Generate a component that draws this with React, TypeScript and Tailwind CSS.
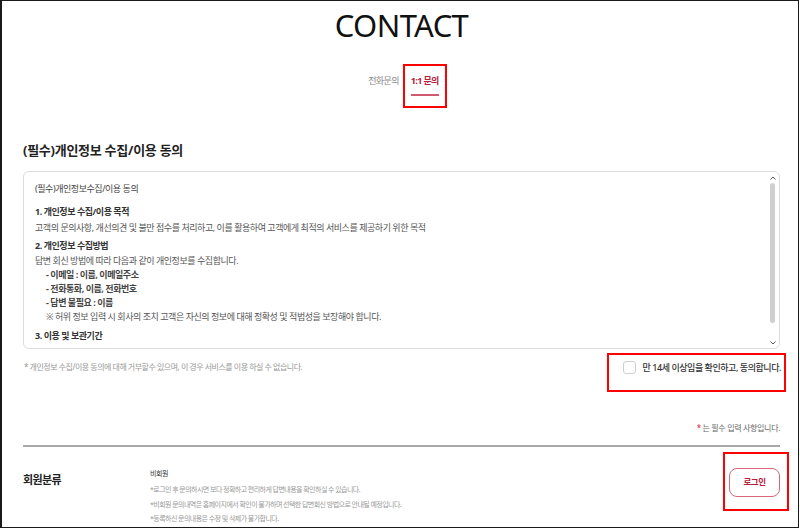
import React from "react";

const FONT = { fontFamily: "'Noto Sans', 'Noto Sans CJK KR', sans-serif" };

const Chevron = ({ up }: { up?: boolean }) => (
  <svg width="6" height="4" viewBox="0 0 6 4" className="block">
    <path
      d={up ? "M0.5 3.5 L3 1 L5.5 3.5" : "M0.5 0.5 L3 3 L5.5 0.5"}
      fill="none"
      stroke="#555"
      strokeWidth="1"
    />
  </svg>
);

const App = () => {
  return (
    <div
      style={FONT}
      className="box-border h-[528px] w-[799px] overflow-hidden border-t border-r border-b border-l-2 border-[#1a1a1a] bg-white"
    >
      <div className="ml-[21px] w-[757px]">
        {/* Title */}
        <h1 className="mt-[6px] text-center text-[31px] leading-[36px] font-normal tracking-[-0.02em] text-[#111]">
          CONTACT
        </h1>

        {/* Tabs */}
        <div className="mt-[21px] ml-[12px] flex items-start justify-center gap-[4px]">
          <span className="mt-[11px] text-[9px] leading-[12px] tracking-[-0.07em] text-[#888]">
            전화문의
          </span>
          <div className="border-2 border-[#ff0000] px-[6px] pt-[9px] pb-[10px]">
            <div className="border-b-2 border-[#d25a70] pb-[7px] text-[9px] leading-[12px] font-bold tracking-[-0.07em] text-[#b3213f]">
              1:1 문의
            </div>
          </div>
        </div>

        {/* Section title */}
        <h2 className="mt-[33px] text-[13px] leading-[18px] font-bold tracking-[-0.02em] text-[#222]">
          (필수)개인정보 수집/이용 동의
        </h2>

        {/* Terms box */}
        <div className="mt-[12px] box-border flex h-[178px] rounded-[6px] border border-[#dcdcdc]">
          <div className="flex-1 overflow-hidden pt-[10px] pl-[11px] text-[9px] leading-[14px] tracking-[-0.05em] text-[#555]">
            <p className="text-[#444]">(필수)개인정보수집/이용 동의</p>
            <p className="mt-[9px] font-bold text-[#333]">1. 개인정보 수집/이용 목적</p>
            <p className="mt-[2px]">
              고객의 문의사항, 개선의견 및 불만 접수를 처리하고, 이를 활용하여 고객에게 최적의 서비스를 제공하기 위한 목적
            </p>
            <p className="mt-[4px] font-bold text-[#333]">2. 개인정보 수집방법</p>
            <p className="mt-[1px]">답변 회신 방법에 따라 다음과 같이 개인정보를 수집합니다.</p>
            <div className="pl-[11px]">
              <p className="font-bold text-[#444]">- 이메일 : 이름, 이메일주소</p>
              <p className="font-bold text-[#444]">- 전화통화, 이름, 전화번호</p>
              <p className="font-bold text-[#444]">- 답변 불필요 : 이름</p>
              <p>※ 허위 정보 입력 시 회사의 조치 고객은 자신의 정보에 대해 정확성 및 적법성을 보장해야 합니다.</p>
            </div>
            <p className="mt-[5px] font-bold text-[#333]">3. 이용 및 보관기간</p>
          </div>
          {/* scrollbar */}
          <div className="mr-[2px] flex w-[9px] flex-col items-center pt-[4px] pb-[3px]">
            <Chevron up />
            <div className="mt-[3px] h-[140px] w-[5px] rounded-full bg-[#cfcfcf]" />
            <div className="flex-1" />
            <Chevron />
          </div>
        </div>

        {/* Note + agreement */}
        <div className="mt-[4px] flex items-start justify-between">
          <p className="mt-[8px] pl-[1px] text-[8px] leading-[12px] tracking-[-0.06em] text-[#999]">
            * 개인정보 수집/이용 동의에 대해 거부할수 있으며, 이 경우 서비스를 이용 하실 수 없습니다.
          </p>
          <div className="mr-[-6px] border-2 border-[#ff0000] pt-[6px] pr-[3px] pb-[16px] pl-[14px]">
            <label className="flex items-center gap-[7px]">
              <span className="box-border block h-[13px] w-[13px] rounded-[3px] border border-[#cfcfcf] bg-white" />
              <span className="text-[9px] leading-[12px] font-medium tracking-[-0.05em] text-[#333]">
                만 14세 이상임을 확인하고, 동의합니다.
              </span>
            </label>
          </div>
        </div>

        <p className="mt-[30px] text-right text-[8px] leading-[12px] tracking-[-0.04em] text-[#666]">
          <span className="text-[#e0243c]">*</span> 는 필수 입력 사항입니다.
        </p>

        <div className="mt-[11px] h-[2px] bg-[#a9a9a9]" />

        {/* Member row */}
        <div className="flex items-start">
          <div className="mt-[25px] w-[127px] text-[11px] leading-[16px] font-bold tracking-[-0.06em] text-[#222]">
            회원분류
          </div>
          <div className="mt-[20px] flex-1">
            <p className="text-[7px] leading-[14px] tracking-[-0.06em] text-[#333]">비회원</p>
            <div className="mt-[2px] text-[7px] leading-[14.5px] tracking-[-0.08em] text-[#999]">
              <p>*로그인 후 문의하시면 보다 정확하고 편리하게 답변내용을 확인하실 수 있습니다.</p>
              <p>*비회원 문의내역은 홈페이지에서 확인이 불가하며 선택한 답변회신 방법으로 안내될 예정입니다.</p>
              <p>*등록하신 문의내용은 수정 및 삭제가 불가합니다.</p>
            </div>
          </div>
          <div className="mt-[5px] mr-[-9px] border-2 border-[#ff0000] pt-[14px] pr-[7px] pb-[12px] pl-[4px]">
            <button
              type="button"
              className="box-border flex h-[29px] w-[51px] items-center justify-center rounded-[8px] border border-[#d9667a] bg-white text-[8.5px] font-bold tracking-[-0.05em] text-[#b3213f]"
            >
              로그인
            </button>
          </div>
        </div>
      </div>
    </div>
  );
};

export default App;
